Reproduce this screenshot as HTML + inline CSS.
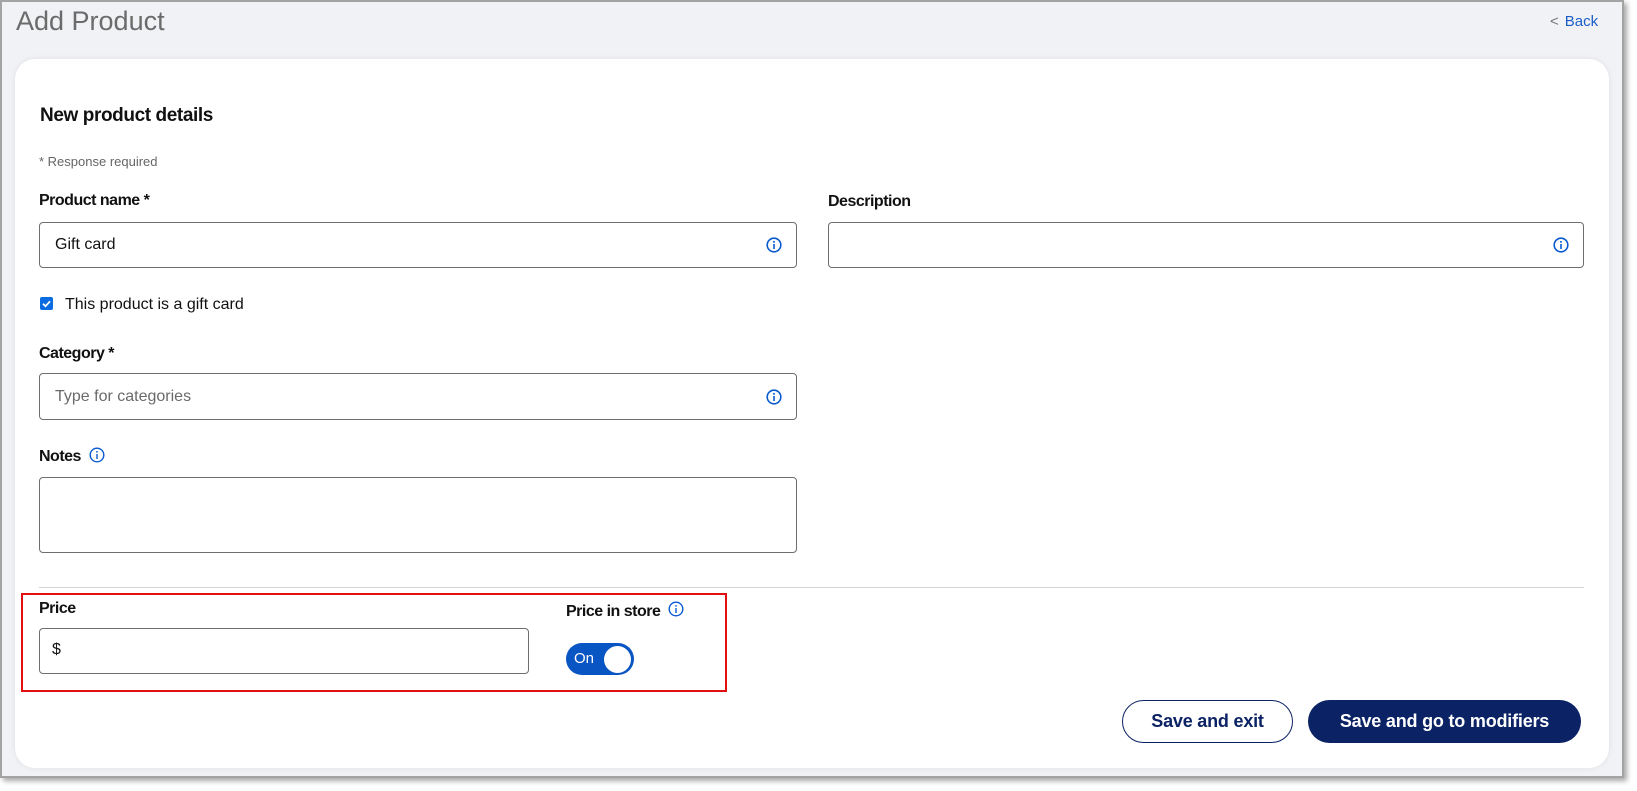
<!DOCTYPE html>
<html><head><meta charset="utf-8"><style>
*{box-sizing:border-box;margin:0;padding:0}
body{width:1637px;height:791px;background:#fff;font-family:"Liberation Sans",Arial,sans-serif;position:relative;overflow:hidden}
.frame{position:absolute;left:0;top:0;width:1624px;height:778px;background:#f1f2f5;border:2px solid #a3a3a3;box-shadow:3px 3px 5px rgba(0,0,0,.35)}
.a{position:absolute}
.title{left:16px;top:6px;font-size:27px;color:#6b6b6b;white-space:nowrap}
.back{left:1550px;top:13px;font-size:15px;color:#1a5dc8}
.back span{color:#777;margin-right:6px}
.card{left:15px;top:59px;width:1594px;height:709px;background:#fff;border-radius:20px;box-shadow:0 0 6px rgba(0,0,0,.08)}
.lbl{font-size:16px;font-weight:bold;color:#111;letter-spacing:-.5px;white-space:nowrap}
.inp{border:1px solid #6e6e6e;border-radius:4px;background:#fff}
.txt{font-size:16px;color:#111;white-space:nowrap}
.info{width:16px;height:16px}
.btn{border-radius:22px;font-size:18px;font-weight:bold;display:flex;align-items:center;justify-content:center;letter-spacing:-.2px}
</style></head><body>
<div class="frame"></div>
<div class="a title">Add Product</div>
<div class="a back"><span>&lt;</span>Back</div>
<div class="a card"></div>

<div class="a" style="left:40px;top:105px;font-size:19px;font-weight:bold;color:#111;letter-spacing:-.4px">New product details</div>
<div class="a" style="left:39px;top:154px;font-size:13px;color:#666">* Response required</div>

<div class="a lbl" style="left:39px;top:192px">Product name *</div>
<div class="a inp" style="left:39px;top:222px;width:758px;height:46px"></div>
<div class="a txt" style="left:55px;top:236px">Gift card</div>
<svg class="a info" style="left:766px;top:237px" viewBox="0 0 16 16"><circle cx="8" cy="8" r="6.8" fill="none" stroke="#0a5ad0" stroke-width="1.6"/><rect x="7.2" y="7" width="1.6" height="5" fill="#0a5ad0"/><circle cx="8" cy="4.9" r="1" fill="#0a5ad0"/></svg>

<div class="a lbl" style="left:828px;top:193px">Description</div>
<div class="a inp" style="left:828px;top:222px;width:756px;height:46px"></div>
<svg class="a info" style="left:1553px;top:237px" viewBox="0 0 16 16"><circle cx="8" cy="8" r="6.8" fill="none" stroke="#0a5ad0" stroke-width="1.6"/><rect x="7.2" y="7" width="1.6" height="5" fill="#0a5ad0"/><circle cx="8" cy="4.9" r="1" fill="#0a5ad0"/></svg>

<svg class="a" style="left:40px;top:297px" width="13" height="13" viewBox="0 0 13 13"><rect width="13" height="13" rx="2" fill="#0a6ce0"/><path d="M3 6.7l2.5 2.5L10 4.3" fill="none" stroke="#fff" stroke-width="1.8"/></svg>
<div class="a txt" style="left:65px;top:296px">This product is a gift card</div>

<div class="a lbl" style="left:39px;top:345px">Category *</div>
<div class="a inp" style="left:39px;top:373px;width:758px;height:47px"></div>
<div class="a txt" style="left:55px;top:388px;color:#6a6a6a">Type for categories</div>
<svg class="a info" style="left:766px;top:389px" viewBox="0 0 16 16"><circle cx="8" cy="8" r="6.8" fill="none" stroke="#0a5ad0" stroke-width="1.6"/><rect x="7.2" y="7" width="1.6" height="5" fill="#0a5ad0"/><circle cx="8" cy="4.9" r="1" fill="#0a5ad0"/></svg>

<div class="a lbl" style="left:39px;top:448px">Notes</div>
<svg class="a info" style="left:89px;top:447px" viewBox="0 0 16 16"><circle cx="8" cy="8" r="6.8" fill="none" stroke="#0a5ad0" stroke-width="1.4"/><rect x="7.3" y="7" width="1.4" height="5" fill="#0a5ad0"/><circle cx="8" cy="4.9" r=".9" fill="#0a5ad0"/></svg>
<div class="a inp" style="left:39px;top:477px;width:758px;height:76px"></div>

<div class="a" style="left:39px;top:587px;width:1545px;height:1px;background:#d4d4d4"></div>
<div class="a" style="left:21px;top:593px;width:706px;height:99px;border:2px solid #e01010"></div>

<div class="a lbl" style="left:39px;top:600px">Price</div>
<div class="a inp" style="left:39px;top:628px;width:490px;height:46px"></div>
<div class="a txt" style="left:52px;top:641px">$</div>

<div class="a lbl" style="left:566px;top:603px">Price in store</div>
<svg class="a info" style="left:668px;top:601px" viewBox="0 0 16 16"><circle cx="8" cy="8" r="6.8" fill="none" stroke="#0a5ad0" stroke-width="1.4"/><rect x="7.3" y="7" width="1.4" height="5" fill="#0a5ad0"/><circle cx="8" cy="4.9" r=".9" fill="#0a5ad0"/></svg>
<div class="a" style="left:566px;top:643px;width:68px;height:32px;border-radius:16px;background:#0a55c4"></div>
<div class="a" style="left:574px;top:650px;font-size:15px;color:#fff">On</div>
<div class="a" style="left:604px;top:646px;width:27px;height:27px;border-radius:50%;background:#fff"></div>

<div class="a btn" style="left:1122px;top:700px;width:171px;height:43px;border:1.5px solid #0b2265;color:#0b2265;background:#fff">Save and exit</div>
<div class="a btn" style="left:1308px;top:700px;width:273px;height:43px;background:#0b2265;color:#fff">Save and go to modifiers</div>
</body></html>
